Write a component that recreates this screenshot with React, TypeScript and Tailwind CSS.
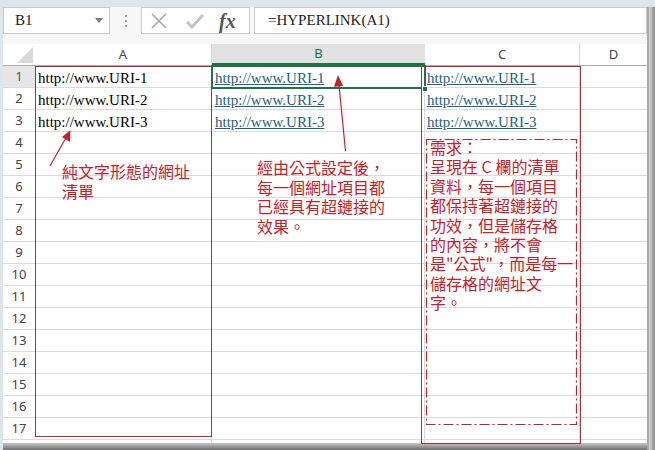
import React from "react";

const rowsCount = 17;

function Row({ n }: { n: number }) {
  const a = n <= 3 ? `http://www.URI-${n}` : "";
  const sel = n === 1;
  return (
    <div className="flex h-[22px]">
      <div
        className={`w-[32px] h-full flex items-center justify-center border-b border-[#dadada] text-[13px] font-['Noto_Sans',sans-serif] ${
          sel ? "bg-[#e6e6e6] text-[#217346]" : "bg-white text-[#444]"
        }`}
      >
        {n}
      </div>
      <div className="w-[177px] h-full border-b border-r border-[#dadada] flex items-end pl-[3px] text-[15px] leading-[18px] text-black font-['Liberation_Serif',serif]">
        {a}
      </div>
      <div className="w-[213px] h-full border-b border-r border-[#dadada] flex items-end pl-[3px] text-[15px] leading-[18px] font-['Liberation_Serif',serif]">
        {a && <span className="underline text-[#235f86] decoration-[#235f86]">{a}</span>}
      </div>
      <div className="w-[155px] h-full border-b border-r border-[#dadada] flex items-end pl-[2px] text-[15px] leading-[18px] font-['Liberation_Serif',serif]">
        {a && <span className="underline text-[#235f86] decoration-[#235f86]">{a}</span>}
      </div>
      <div className="w-[67px] h-full border-b border-[#dadada]" />
    </div>
  );
}

export default function App() {
  const red = "#c4222b";
  return (
    <div className="relative w-[655px] h-[450px] overflow-hidden bg-[#dfe5ec] flex flex-col">
      <div className="h-[7px] shrink-0" />
      <div className="flex flex-1 min-h-0">
        <div className="w-[3px] shrink-0 bg-[#dfe5ec]" />
        <div className="w-[644px] flex flex-col bg-white">
          {/* formula bar */}
          <div className="h-[37px] shrink-0 flex items-start bg-[#f7f7f7]">
            <div className="w-[107px] h-[27px] bg-white border border-[#c9c9c9] flex items-center justify-between pl-[11px] pr-[6px]">
              <span className="text-[15px] text-[#222] font-['Liberation_Serif',serif]">B1</span>
              <svg width="8" height="5" viewBox="0 0 8 5"><path d="M0 0h8L4 5z" fill="#7a7a7a" /></svg>
            </div>
            <div className="w-[31px] h-[27px] flex flex-col items-center justify-center gap-[3px]">
              <div className="w-[2px] h-[2px] bg-[#a0a0a0]" />
              <div className="w-[2px] h-[2px] bg-[#a0a0a0]" />
              <div className="w-[2px] h-[2px] bg-[#a0a0a0]" />
            </div>
            <div className="w-[109px] h-[27px] bg-white border border-[#c9c9c9] flex items-center">
              <svg width="18" height="16" viewBox="0 0 18 16" className="ml-[8px]">
                <path d="M2 1L16 15M16 1L2 15" stroke="#a8a8a8" strokeWidth="1.6" />
              </svg>
              <svg width="20" height="16" viewBox="0 0 20 16" className="ml-[17px]">
                <path d="M2 9L7 14L18 2" stroke="#c4c4c4" strokeWidth="3" fill="none" />
              </svg>
              <span className="ml-[14px] text-[20px] font-bold italic text-[#555] leading-none font-['Liberation_Serif',serif]">fx</span>
            </div>
            <div className="ml-[4px] flex-1 h-[27px] bg-white border border-[#c9c9c9] flex items-center pl-[13px]">
              <span className="text-[15px] text-[#222] font-['Liberation_Serif',serif]">=HYPERLINK(A1)</span>
            </div>
          </div>
          {/* column headers */}
          <div className="flex h-[22px] shrink-0 border-b border-[#ababab] bg-white font-['Noto_Sans',sans-serif] text-[13px] text-[#444]">
            <div className="w-[32px] relative">
              <svg width="16" height="16" viewBox="0 0 16 16" className="absolute right-[2px] bottom-[2px]">
                <path d="M16 0V16H0z" fill="#d7d7d7" />
              </svg>
            </div>
            <div className="w-[177px] border-r border-[#dadada] flex items-center justify-center">A</div>
            <div className="w-[213px] bg-[#e1e1e1] text-[#217346] border-b-2 border-[#217346] flex items-center justify-center">B</div>
            <div className="w-[155px] border-r border-[#dadada] flex items-center justify-center">C</div>
            <div className="w-[67px] flex items-center justify-center">D</div>
          </div>
          {Array.from({ length: rowsCount }, (_, i) => (
            <Row key={i} n={i + 1} />
          ))}
          <div className="flex h-[3px] shrink-0">
            <div className="w-[32px]" />
            <div className="w-[177px] border-r border-[#dadada]" />
            <div className="w-[213px] border-r border-[#dadada]" />
            <div className="w-[155px] border-r border-[#dadada]" />
          </div>
          <div className="flex-1 bg-gradient-to-b from-[#c8c8c8] to-[#6e6e6e]" />
        </div>
        <div className="w-[8px] shrink-0 flex">
          <div className="w-[2px] bg-[#a9a9a9]" />
          <div className="flex-1 bg-gradient-to-r from-[#d8d8d8] to-[#8a8a8a]" />
        </div>
      </div>

      {/* selected cell B1 */}
      <div className="absolute left-[211px] top-[65px] w-[215px] h-[24px] border-2 border-[#217346]" />
      <div className="absolute left-[422px] top-[86px] w-[6px] h-[6px] bg-[#217346] border border-white" />

      {/* red rectangles */}
      <div className="absolute left-[35px] top-[66px] w-[177px] h-[371px] border border-[#a8323a]" />
      <div className="absolute left-[421px] top-[66px] w-[160px] h-[378px] border border-[#a8323a]" />

      <svg className="absolute left-0 top-0" width="655" height="450" viewBox="0 0 655 450">
        <rect x="426.5" y="139.5" width="150" height="285" fill="none" stroke="#b8262e" strokeWidth="1.2" strokeDasharray="10 3 2 3" />
        <line x1="50" y1="166" x2="67" y2="136" stroke={red} strokeWidth="1.2" />
        <path d="M70.5 130L70 142L62 137z" fill={red} />
        <line x1="345.5" y1="151" x2="338.8" y2="83" stroke={red} strokeWidth="1.2" />
        <path d="M338 75L343 86L334 86.8z" fill={red} />
      </svg>

      {/* annotations */}
      <div className="absolute left-[62px] top-[162px] text-[16px] leading-[19.5px] text-[#c8202a] font-['Noto_Sans_CJK_TC',sans-serif]">
        <div>純文字形態的網址</div>
        <div>清單</div>
      </div>
      <div className="absolute left-[257px] top-[158px] text-[16px] leading-[19.5px] text-[#c8202a] font-['Noto_Sans_CJK_TC',sans-serif]">
        <div>經由公式設定後，</div>
        <div>每一個網址項目都</div>
        <div>已經具有超鏈接的</div>
        <div>效果。</div>
      </div>
      <div className="absolute left-[430px] top-[138px] text-[16px] leading-[19.4px] text-[#c8202a] font-['Noto_Sans_CJK_TC',sans-serif]">
        <div>需求：</div>
        <div>呈現在 C 欄的清單</div>
        <div>資料，每一個項目</div>
        <div>都保持著超鏈接的</div>
        <div>功效，但是儲存格</div>
        <div>的內容，將不會</div>
        <div>是"公式"，而是每一</div>
        <div>儲存格的網址文</div>
        <div>字。</div>
      </div>
    </div>
  );
}
